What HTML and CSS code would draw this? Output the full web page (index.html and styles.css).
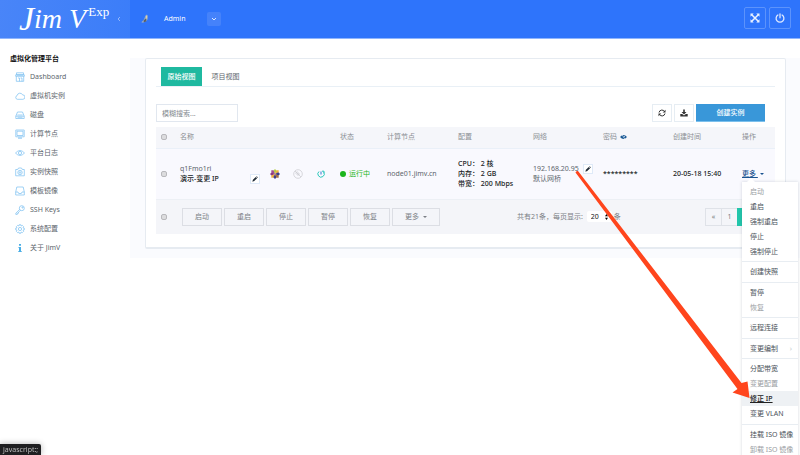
FILE: index.html
```html
<!DOCTYPE html>
<html lang="zh-CN">
<head>
<meta charset="utf-8">
<title>JimV</title>
<link rel="stylesheet" href="styles.css">
</head>
<body>
<header class="topbar">
  <div class="brand">
    <span class="logo"><span class="logo-initial">J</span><span>im V</span></span>
    <span class="edition">Exp</span>
    <svg class="collapse" viewBox="0 0 4 6"><path d="M3 1 1 3l2 2"/></svg>
  </div>
  <div class="user">
    <svg class="avatar" viewBox="0 0 9 12"><path fill="#8fa8c8" d="M0 10 3 7 5 2 6.500.500 8 2 7.500 7 5.500 9 2 10.500z"/><path fill="#d9cfae" d="M5.500 2h1.500v4H5.500z"/><path fill="#5b6068" d="M3 7.500 6 5v4l-3 1z"/></svg>
    <span>Admin</span>
    <button class="user-toggle" aria-label="用户菜单"><svg viewBox="0 0 6 4"><path d="M1 1l2 2 2-2"/></svg></button>
  </div>
  <div class="top-actions">
    <button aria-label="全屏"><svg viewBox="0 0 10 10"><path d="M1.500 1.500l7 7M8.500 1.500l-7 7" stroke="#eaf1ff" stroke-width="1.500"/><path fill="#eaf1ff" d="M.500.500h3.200L.500 3.700zM9.500.500v3.200L6.300.500zM.500 9.500V6.300l3.200 3.200zM9.500 9.500H6.300l3.200-3.200z"/></svg></button>
    <button aria-label="退出"><svg viewBox="0 0 10 10" fill="none" stroke="#dfe9ff" stroke-width="1.300" stroke-linecap="round"><path d="M2.900 2a3.900 3.900 0 1 0 4.200 0M5 .800v4"/></svg></button>
  </div>
</header>

<div class="layout">
  <nav class="sidebar">
    <h2>虚拟化管理平台</h2>
    <ul>
      <li><a href="#"><svg viewBox="0 0 10 10"><path d="M1.500.800h7v2h-7zM.700 2.800h8.600v1.500H.700zM1.300 4.300v5h7.400v-5M3 6h1.500v3.300M5.500 6H7v3.300M3 3v1M5 3v1M7 3v1"/></svg>Dashboard</a></li>
      <li><a href="#"><svg viewBox="0 0 10 10"><path d="M2.300 8.300a1.900 1.900 0 0 1-.200-3.700 2.900 2.900 0 0 1 5.500-.700 2.200 2.200 0 0 1 .300 4.400z"/></svg>虚拟机实例</a></li>
      <li><a href="#"><svg viewBox="0 0 10 10"><path d="M2.500 2h5l1.700 4.200v2.300H.800V6.200zM.800 6.200h8.400M2.500 7.300h5M2.300 5h5.400"/></svg>磁盘</a></li>
      <li><a href="#"><svg viewBox="0 0 10 10"><path d="M.800 1h8.400v6.800H.800zM2 2.200h6v4.300H2zM3 9.300h4M4 8v1M6 8v1"/></svg>计算节点</a></li>
      <li><a href="#"><svg viewBox="0 0 10 10"><path d="M.500 5Q5 0 9.500 5 5 10 .500 5z"/><circle cx="5" cy="5" r="1.600"/></svg>平台日志</a></li>
      <li><a href="#"><svg viewBox="0 0 10 10"><path d="M.700 2.500h2L3.500 1h3l.800 1.500h2v6.300H.700z"/><circle cx="5" cy="5.500" r="2.200"/><circle cx="5" cy="5.500" r=".800"/></svg>实例快照</a></li>
      <li><a href="#"><svg viewBox="0 0 10 10"><path d="M1.800 1h6.400L9.300 6v3H.700V6zM.700 6H3l.700 1.500h2.600L7 6h2.300"/></svg>模板镜像</a></li>
      <li><a href="#"><svg viewBox="0 0 10 10"><circle cx="6.800" cy="3.200" r="2.500"/><circle cx="7.500" cy="2.500" r=".600"/><path d="M4.600 4.400.800 8.200v1.200h1.500V8.200h1.200V7l2-1.500"/></svg>SSH Keys</a></li>
      <li><a href="#"><svg viewBox="0 0 10 10"><circle cx="5" cy="5" r="1.600"/><path d="M4.200.700h1.600l.300 1.300 1.300-.600 1.200 1.200L8 3.900l1.300.300v1.600L8 6.100l.600 1.300-1.200 1.200L6.100 8l-.300 1.300H4.200L3.900 8l-1.300.600-1.200-1.200L2 6.100.700 5.800V4.200L2 3.900l-.600-1.300 1.200-1.200L3.900 2z"/></svg>系统配置</a></li>
      <li><a href="#"><svg viewBox="0 0 10 10"><path class="solid" d="M4 1h2v1.800H4zM3.500 4H6v4h.700v1H3.300V8H4V5h-.500z"/></svg>关于 JimV</a></li>
    </ul>
  </nav>

  <main class="content">
    <section class="panel">
      <div class="tabs">
        <button class="tab active">原始视图</button>
        <button class="tab">项目视图</button>
      </div>
      <div class="toolbar">
        <input class="search" type="text" placeholder="模糊搜索..." aria-label="模糊搜索">
        <div class="tools">
          <button class="tool" aria-label="刷新"><svg viewBox="0 0 8 8" fill="none" stroke="#333" stroke-width="1"><path d="M1 3.500a3 3 0 0 1 5.500-1M7 4.500a3 3 0 0 1-5.500 1"/><path fill="#333" stroke="none" d="M7.500.700v2.800H4.700zM.500 7.300V4.500h2.800z"/></svg></button>
          <button class="tool" aria-label="下载"><svg viewBox="0 0 8 8" fill="#333"><path d="M3.200.500h1.600v2.400h1.700L4 5.400 1.500 2.900h1.700zM.300 5h1.900L4 6.500 5.800 5h1.900v2.500H.300z"/></svg></button>
          <button class="create">创建实例</button>
        </div>
      </div>
      <table class="grid">
        <colgroup><col class="c-check"><col><col class="c-state"><col class="c-node"><col class="c-conf"><col class="c-net"><col class="c-net"><col class="c-time"><col class="c-op"></colgroup>
        <thead>
          <tr>
            <th><input type="checkbox" aria-label="全选"></th>
            <th>名称</th><th>状态</th><th>计算节点</th><th>配置</th><th>网络</th>
            <th><span class="inline">密码 <svg class="eye" viewBox="0 0 8 6"><path fill="#1a5a96" d="M0 3Q4-1.500 8 3 4 7.500 0 3z"/><path stroke="#f5f6fa" stroke-width=".700" d="M2.500.500l3 5"/><circle cx="5" cy="2.500" r=".600" fill="#f5f6fa"/></svg></span></th>
            <th>创建时间</th><th>操作</th>
          </tr>
        </thead>
        <tbody>
          <tr>
            <td><input type="checkbox" aria-label="选择 q1Fmo1ri"></td>
            <td>
              <div class="name-cell">
                <div class="name"><span class="muted">q1Fmo1ri</span><strong>演示-变更 IP</strong></div>
                <button class="edit low" aria-label="编辑名称"><svg viewBox="0 0 8 8"><path d="M.500 7.500l.700-2.500L5 1.200 6.800 3 3 6.800zM5.500.700l.700-.500 1.600 1.600-.500.700z"/></svg></button>
                <svg class="os" viewBox="0 0 10 10"><path fill="#b5cf4a" d="M5 0l1.700 1.700L5 5 3.300 1.700z"/><path fill="#a0508f" d="M1.300 1.300h2.200L5 5 1.300 3.500z"/><path fill="#efb03c" d="M8.700 1.300v2.200L5 5l1.500-3.700z"/><path fill="#3d3c8c" d="M10 5L8.300 6.700 5 5l3.300-1.700z"/><path fill="#8e3a80" d="M0 5l1.700-1.700L5 5 1.700 6.700z"/><path fill="#efb03c" d="M1.300 8.700V6.500L5 5 3.500 8.700z"/><path fill="#3d3c8c" d="M5 10L3.300 8.300 5 5l1.700 3.300z"/><path fill="#a5713f" d="M8.700 8.700H6.500L5 5l3.700 1.500z"/></svg>
                <svg class="disc" viewBox="0 0 10 10"><circle cx="5" cy="5" r="4.300"/><circle cx="5" cy="5" r="1.200"/><path d="M2 2l6 6M2.500 4.500Q3 3 4.500 2.500"/></svg>
                <svg class="power" viewBox="0 0 8 8"><path d="M2 1.500a3.200 3.200 0 1 0 4.800.800"/><path stroke="#3675d0" d="M4 1.500v3"/><path d="M5 1.200h2v2"/></svg>
              </div>
            </td>
            <td><span class="state"><i></i>运行中</span></td>
            <td>node01.jimv.cn</td>
            <td class="dark medium">CPU： 2 核<br>内存： 2 GB<br>带宽： 200 Mbps</td>
            <td><div class="net"><span>192.168.20.95<br>默认网桥</span><button class="edit" aria-label="编辑网络"><svg viewBox="0 0 8 8"><path d="M.500 7.500l.700-2.500L5 1.200 6.800 3 3 6.800zM5.500.700l.700-.500 1.600 1.600-.500.700z"/></svg></button></div></td>
            <td class="dark medium">*********</td>
            <td class="dark medium">20-05-18 15:40</td>
            <td class="op">
              <a class="more" href="#">更多 <i class="caret"></i></a>
              <div class="menu">
                <div class="group"><a class="off" href="#">启动</a><a href="#">重启</a><a href="#">强制重启</a><a href="#">停止</a><a href="#">强制停止</a></div>
                <div class="group"><a href="#">创建快照</a></div>
                <div class="group"><a href="#">暂停</a><a class="off" href="#">恢复</a></div>
                <div class="group"><a href="#">远程连接</a></div>
                <div class="group"><a class="sub" href="#">变更编制<span>›</span></a></div>
                <div class="group"><a href="#">分配带宽</a><a class="off" href="#">变更配置</a><a class="hover" href="#">修正 IP</a><a href="#">变更 VLAN</a></div>
                <div class="group"><a href="#">挂载 ISO 镜像</a><a class="off" href="#">卸载 ISO 镜像</a></div>
              </div>
            </td>
          </tr>
        </tbody>
        <tfoot>
          <tr>
            <td><input type="checkbox" aria-label="全选"></td>
            <td colspan="8">
              <div class="footer">
                <div class="bulk"><button>启动</button><button>重启</button><button>停止</button><button>暂停</button><button>恢复</button><button class="wide">更多 <i class="caret"></i></button></div>
                <label class="page-size">共有21条，每页显示: <span class="select"><select><option>20</option></select><svg viewBox="0 0 4 8"><path d="M0 3l2-3 2 3zM0 5h4L2 8z"/></svg></span>条</label>
                <div class="pager"><a href="#">«</a><a href="#">1</a><a class="current" href="#">2</a></div>
              </div>
            </td>
          </tr>
        </tfoot>
      </table>
    </section>
  </main>
</div>

<svg class="arrow" viewBox="0 0 180 235"><path d="M5.500 5.500Q6 3.500 8 4L171.500 216l6-1.500 2 16.500-17-5.500 5-3.500z"/></svg>
<div class="statusbar">javascript:;</div>
</body>
</html>
```
FILE: styles.css
```css
* { box-sizing: border-box; }

html, body { height: 100%; }

body {
  position: relative;
  margin: 0;
  overflow: hidden;
  background: #fff;
  color: #5d666d;
  font: 7px/10px "Noto Sans", "Noto Sans CJK SC", sans-serif;
}

button, input, select { font: inherit; color: inherit; margin: 0; }
button { padding: 0; border: 0; background: none; display: flex; align-items: center; justify-content: center; }
a { color: inherit; text-decoration: none; }
svg { flex: none; }

.topbar {
  display: flex;
  height: 39px;
  background: #2e74fb;
  border-bottom: 1px solid #8fb5fd;
  color: #fff;
}
.brand {
  display: flex;
  width: 130px;
  padding-left: 19px;
  background: linear-gradient(100deg, #4985f8, #3b7df9);
  font-family: "Liberation Serif", serif;
}
.logo { display: flex; align-items: center; font-style: italic; font-size: 28px; line-height: 34px; white-space: pre; }
.logo-initial { font-size: 34px; line-height: 40px; }
.edition { padding-top: 5px; margin-left: 2px; font-size: 13px; line-height: 13px; }
.collapse { width: 4px; height: 6px; margin: 16px 9px 0 auto; fill: none; stroke: #8fb5fd; }
.user { display: flex; align-items: center; padding-left: 11px; height: 37px; }
.avatar { width: 8px; height: 10px; margin-right: 15px; }
.user-toggle { width: 14px; height: 14px; margin-left: 22px; border-radius: 2px; background: #4582fa; }
.user-toggle svg { width: 6px; height: 4px; fill: none; stroke: #dce8ff; }
.top-actions { display: flex; gap: 3px; margin: 7px 9px 0 auto; }
.top-actions button { width: 22px; height: 22px; border: 1px solid #5c93fc; border-radius: 2px; }
.top-actions svg { width: 10px; height: 10px; }

.layout { display: flex; padding-top: 19px; }
.sidebar { width: 130px; flex: none; }
.sidebar h2 { margin: -4px 0 3px 10px; color: #111; font-size: 7px; line-height: 10px; }
.sidebar ul { margin: 0; padding: 0; list-style: none; }
.sidebar a { display: flex; align-items: center; height: 19px; padding-left: 15px; }
.sidebar svg { width: 10px; height: 10px; margin-right: 5px; fill: none; stroke: #79bff0; stroke-width: .7; }
.sidebar .solid { fill: #4aaee6; stroke: none; }

.content { flex: 1; height: 200px; padding: 0 14px 0 15px; background: #fafbfe; }
.panel { padding: 8px 10px 13px; border: 1px solid #e6ebf1; border-bottom-width: 2px; border-radius: 2px; background: #fff; }
.tabs { display: flex; padding-left: 5px; border-bottom: 1px solid #e9f0f6; }
.tab { width: 41px; height: 19px; margin-right: 3px; }
.tab.active { background: #1fb9a0; color: #fff; font-weight: 500; }
.toolbar { display: flex; justify-content: space-between; padding: 17px 10px 5px 0; }
.search { width: 82px; height: 18px; padding: 0 5px; border: 1px solid #e1e7ef; background: #fff; }
.search::placeholder { color: #858b90; opacity: 1; }
.tools { display: flex; gap: 2px; }
.tool { width: 20px; height: 18px; border: 1px solid #e6edf3; }
.tool svg { width: 8px; height: 8px; }
.create { width: 69px; height: 18px; background: #3997d9; border-bottom: 1px solid #7cc0ec; color: #fff; font-weight: 500; }

.grid { width: 100%; table-layout: fixed; border-collapse: collapse; }
.c-check { width: 24px; }
.c-state { width: 47px; }
.c-node { width: 71px; }
.c-conf { width: 75px; }
.c-net { width: 70px; }
.c-time { width: 69px; }
.c-op { width: 33px; }
.grid th, .grid td { padding: 0; text-align: left; white-space: nowrap; font-weight: 400; }
.grid thead tr { height: 21px; background: #f5f6fa; border-bottom: 1px solid #eaf0f8; color: #8b8f94; }
.grid tbody tr { height: 51px; background: #f9f9fe; }
.grid tfoot tr { height: 35px; background: #f4f5f9; border-top: 1px solid #edf0f5; color: #7b7f85; }
.grid input[type="checkbox"] {
  display: block;
  appearance: none;
  width: 6px;
  height: 6px;
  margin-left: 5px;
  border: 1px solid #b8b8bc;
  border-radius: 2px;
  background: #dcdcde;
}
.inline { display: flex; align-items: center; gap: 3px; }
.eye { width: 7px; height: 6px; }
.dark, .name strong { color: #17191c; }
.grid .medium, .name strong { font-weight: 500; }
.name-cell { display: flex; align-items: center; }
.name { display: flex; flex-direction: column; width: 70px; }
.edit { width: 10px; height: 10px; border: 1px solid #dfeaf8; background: #fff; }
.edit svg { width: 6px; height: 6px; fill: #222d38; }
.edit.low { margin-top: 10px; }
.os { width: 10px; height: 10px; margin-left: 10px; }
.disc { width: 10px; height: 10px; margin-left: 13px; fill: none; stroke: #c9c9ce; stroke-width: .7; }
.power { width: 8px; height: 8px; margin-left: 14px; fill: none; stroke: #28c6ba; }
.state { display: flex; align-items: center; gap: 3px; color: #1cb51c; }
.state i { width: 6px; height: 6px; border-radius: 50%; background: #1cb51c; }
.net { display: flex; align-items: center; gap: 4px; }
.net .edit { margin-bottom: 9px; }
.caret { display: inline-block; margin-left: 2px; border: 2px solid transparent; border-top-color: currentColor; border-bottom: 0; vertical-align: middle; }

.footer { display: flex; align-items: center; padding-left: 2px; }
.bulk { display: flex; gap: 2px; }
.bulk button { width: 40px; height: 18px; border: 1px solid #dcdee4; }
.bulk .wide { width: 48px; white-space: pre; }
.page-size { display: flex; align-items: center; margin-left: 77px; white-space: pre; }
.select { display: flex; align-items: center; width: 25px; height: 11px; padding-left: 4px; margin: 0 2px; border-radius: 2px; background: #fff; color: #111; }
.select select { appearance: none; width: 14px; padding: 0; border: 0; background: none; }
.select svg { width: 3px; height: 6px; }
.pager { display: flex; margin-left: auto; margin-right: 22px; }
.pager a { width: 16px; height: 18px; border: 1px solid #dfe2e8; border-right: 0; text-align: center; line-height: 16px; }
.pager .current { background: #22c6ab; color: #fff; border-color: #22c6ab; }

.op { position: relative; }
.more { color: #1b5490; text-decoration: underline; font-weight: 500; }
.menu {
  position: absolute;
  z-index: 2;
  top: 33px;
  left: 0;
  width: 56px;
  padding: 2px 0;
  background: #fff;
  box-shadow: 0 0 3px rgba(40, 60, 80, .2);
  color: #4b535a;
}
.menu::before { content: ""; position: absolute; top: -4px; left: 5px; border: 4px solid transparent; border-top: 0; border-bottom-color: #fff; }
.group { padding: 2px 0; border-bottom: 1px solid #e8edf2; }
.group:nth-child(even) { padding-bottom: 3px; }
.group:first-child { padding-top: 0; }
.group:last-child { border-bottom: 0; }
.group a { display: block; height: 15px; padding-left: 8px; line-height: 15px; }
.group .off { color: #999da2; }
.group .hover { background: #eef1f4; text-decoration: underline; font-weight: 500; color: #222; }
.group .sub { display: flex; justify-content: space-between; padding-right: 6px; }
.group .sub span { color: #c5c9cd; }

.arrow { position: absolute; z-index: 3; left: 570px; top: 167px; width: 180px; height: 235px; fill: #ff451d; pointer-events: none; }
.statusbar {
  position: fixed;
  left: 0;
  bottom: 0;
  height: 11px;
  padding: 0 3px;
  border-radius: 0 2px 0 0;
  background: #1f1f21;
  box-shadow: 0 0 6px rgba(0, 0, 0, .3);
  color: #bdbdbd;
  line-height: 11px;
}
```
